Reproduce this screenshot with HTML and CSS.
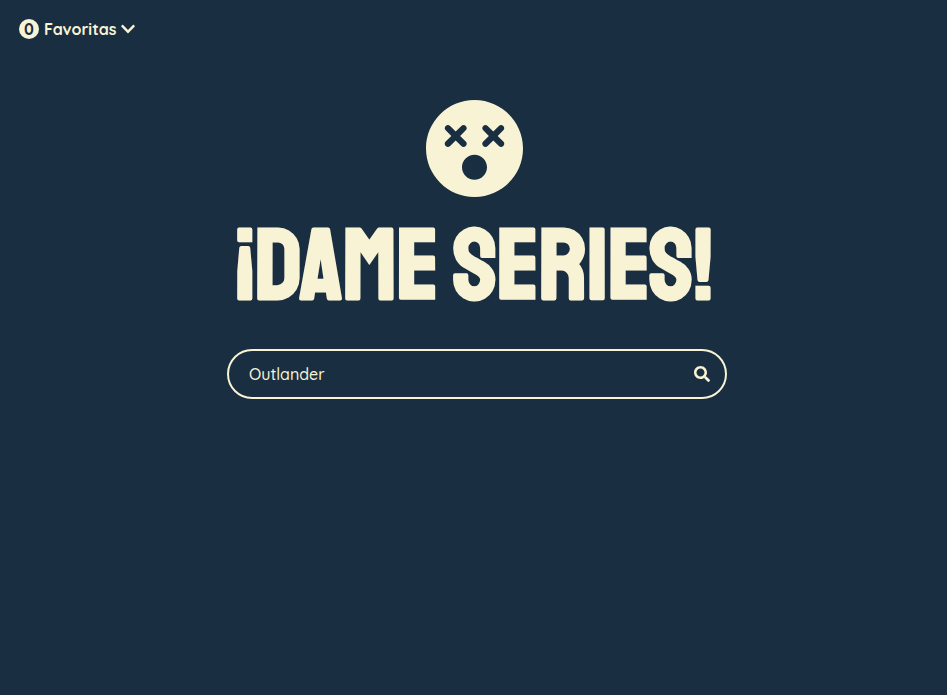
FILE: index.html
```html
<!DOCTYPE html>
<html lang="es">
<head>
<meta charset="utf-8">
<meta name="viewport" content="width=device-width, initial-scale=1">
<title>¡Dame series!</title>
<link rel="stylesheet" href="styles.css">
</head>
<body>
<header class="header">
  <button class="favorites" type="button" aria-expanded="false">
    <span class="favorites__count">0</span>
    <span class="favorites__label">Favoritas</span>
    <svg class="favorites__chevron" viewBox="0 0 448 512" aria-hidden="true"><path d="M207.029 381.476L12.686 187.132c-9.373-9.373-9.373-24.569 0-33.941l22.667-22.667c9.357-9.357 24.522-9.375 33.901-.04L224 284.505l154.745-154.021c9.379-9.335 24.544-9.317 33.901.04l22.667 22.667c9.373 9.373 9.373 24.569 0 33.941L240.971 381.476c-9.373 9.372-24.569 9.372-33.942 0z"/></svg>
  </button>
</header>
<main class="main">
  <svg class="logo" viewBox="0 8 496 496" aria-hidden="true"><path d="M248 8C111 8 0 119 0 256s111 248 248 248 248-111 248-248S385 8 248 8zm-96 206.600l-28.700 28.700c-14.800 14.800-37.800-7.500-22.600-22.600l28.700-28.700-28.700-28.700c-15-15 7.700-37.600 22.600-22.600l28.700 28.700 28.700-28.700c15-15 37.600 7.700 22.600 22.600L174.600 192l28.700 28.700c15.200 15.200-7.900 37.400-22.600 22.600L152 214.600zM248 416c-35.300 0-64-28.700-64-64s28.700-64 64-64 64 28.700 64 64-28.700 64-64 64zm147.300-195.300c15.200 15.200-7.900 37.400-22.600 22.600L344 214.600l-28.700 28.700c-14.800 14.800-37.800-7.500-22.600-22.600l28.700-28.700-28.700-28.700c-15-15 7.700-37.600 22.600-22.600l28.700 28.700 28.700-28.700c15-15 37.600 7.700 22.600 22.600L366.600 192l28.700 28.700z"/></svg>
  <h1 class="title">¡DAME SERIES!</h1>
  <form class="search">
    <input class="search__input" type="text" value="Outlander" aria-label="Buscar series">
    <button class="search__button" type="submit" aria-label="Buscar">
      <svg class="search__icon" viewBox="0 0 512 512" aria-hidden="true"><path d="M505 442.700L405.300 343c-4.500-4.500-10.600-7-17-7H372c27.600-35.300 44-79.700 44-128C416 93.100 322.900 0 208 0S0 93.100 0 208s93.100 208 208 208c48.300 0 92.700-16.400 128-44v16.300c0 6.400 2.500 12.500 7 17l99.700 99.700c9.400 9.400 24.600 9.400 33.900 0l28.300-28.300c9.400-9.400 9.400-24.600.1-34zM208 336c-70.700 0-128-57.200-128-128 0-70.700 57.200-128 128-128 70.700 0 128 57.200 128 128 0 70.700-57.200 128-128 128z"/></svg>
    </button>
  </form>
</main>
</body>
</html>
```
FILE: styles.css
```css
:root {
  --navy: #1a2e41;
  --cream: #f9f3d5;
}

* {
  box-sizing: border-box;
}

body {
  margin: 0;
  min-height: 100vh;
  background: var(--navy);
  color: var(--cream);
  font-family: Quicksand, Lato, sans-serif;
  font-size: 16px;
}

button {
  padding: 0;
  border: 0;
  background: none;
  color: inherit;
  font: inherit;
  cursor: pointer;
}

svg {
  display: block;
  fill: currentColor;
}

.header {
  padding: 19px;
}

.favorites {
  display: flex;
  align-items: center;
  gap: 5px;
  font-weight: 700;
  line-height: 20px;
}

.favorites__count {
  width: 20px;
  height: 20px;
  border-radius: 50%;
  background: var(--cream);
  color: var(--navy);
  text-align: center;
}

.favorites__chevron {
  width: 14px;
  height: 16px;
}

.main {
  display: flex;
  flex-direction: column;
  align-items: center;
  padding: 42px 19px 20px 20px;
}

.logo {
  width: 97px;
  height: 97px;
}

.title {
  margin: 19px 0 31px;
  font-family: Staatliches, "Liberation Sans Narrow", sans-serif;
  font-size: 100px;
  font-weight: 700;
  line-height: 102px;
  text-align: center;
}

.search {
  display: flex;
  align-items: center;
  width: 100%;
  max-width: 500px;
  height: 50px;
  margin-left: 6px;
  padding: 0 15px 0 20px;
  border: 2px solid var(--cream);
  border-radius: 25px;
}

.search__input {
  flex: 1;
  min-width: 0;
  padding: 0;
  border: 0;
  outline: 0;
  background: none;
  color: inherit;
  font: inherit;
  font-weight: 500;
}

.search__icon {
  width: 16px;
  height: 16px;
}
```
